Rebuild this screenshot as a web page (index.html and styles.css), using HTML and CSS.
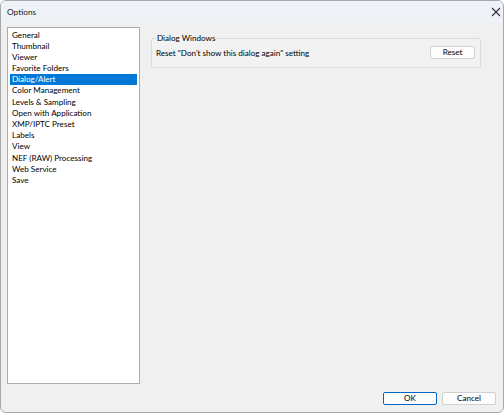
FILE: index.html
```html
<!DOCTYPE html>
<html>
<head>
<meta charset="utf-8">
<link rel="stylesheet" href="styles.css">
</head>
<body>
<div class="window">
  <div class="titlebar">
    <span class="title">Options</span>
    <svg class="close" width="10" height="10" viewBox="0 0 10 10"><path d="M1 1 L9 9 M9 1 L1 9" stroke="#333" stroke-width="1.1" fill="none"/></svg>
  </div>
  <div class="main">
    <ul class="list">
      <li>General</li>
      <li>Thumbnail</li>
      <li>Viewer</li>
      <li>Favorite Folders</li>
      <li class="sel">Dialog/Alert</li>
      <li>Color Management</li>
      <li>Levels &amp; Sampling</li>
      <li>Open with Application</li>
      <li>XMP/IPTC Preset</li>
      <li>Labels</li>
      <li>View</li>
      <li>NEF (RAW) Processing</li>
      <li>Web Service</li>
      <li>Save</li>
    </ul>
    <div class="pane">
      <fieldset class="group">
        <legend>Dialog Windows</legend>
        <div class="row">
          <span>Reset "Don't show this dialog again" setting</span>
          <button class="btn reset">Reset</button>
        </div>
      </fieldset>
    </div>
  </div>
  <div class="footer">
    <button class="btn ok">OK</button>
    <button class="btn">Cancel</button>
  </div>
</div>
</body>
</html>
```
FILE: styles.css
```css
html, body { margin: 0; padding: 0; }
body {
  font-family: Lato, "Noto Sans", sans-serif;
  font-size: 8.1px;
  color: #000;
  background: #fff;
}
.window {
  width: 504px;
  height: 413px;
  box-sizing: border-box;
  border: 1px solid #a8a8a8;
  border-radius: 6px;
  background: #f0f0f0;
  display: flex;
  flex-direction: column;
  overflow: hidden;
}
.titlebar {
  height: 22px;
  flex: none;
  display: flex;
  align-items: center;
  justify-content: space-between;
  padding: 0 2px 0 6px;
  background: linear-gradient(#eef3f9, #eef2f7);
}
.title { font-size: 8.3px; color: #1a1a1a; }
.main {
  display: flex;
  padding: 4px 0 0 6px;
}
.list {
  list-style: none;
  margin: 0;
  padding: 1.5px 2px 1px;
  width: 133px;
  height: 357px;
  box-sizing: border-box;
  background: #fff;
  border: 1px solid #adadad;
}
.list li {
  height: 11.2px;
  line-height: 11.2px;
  padding-left: 2px;
  white-space: nowrap;
}
.list li.sel {
  background: #0078d7;
  color: #fff;
}
.pane {
  margin-left: 11px;
  padding-top: 6px;
}
.group {
  margin: 0;
  width: 330px;
  box-sizing: border-box;
  border: 1px solid #dcdcdc;
  border-radius: 2px;
  padding: 3px 5px 8px 4px;
  background: #f2f2f2;
}
.group legend {
  padding: 0 1px;
  margin-left: 0;
}
.row {
  display: flex;
  align-items: center;
  justify-content: space-between;
}
.btn {
  font-family: inherit;
  font-size: 8.1px;
  color: #000;
  background: #fdfdfd;
  border: 1px solid #d0d0d0;
  border-radius: 2px;
  height: 13px;
  padding: 0;
  line-height: 11px;
}
.reset { width: 45px; }
.footer {
  display: flex;
  justify-content: flex-end;
  gap: 5px;
  padding: 8px 7px 0 0;
}
.footer .btn { width: 54px; }
.ok { border-color: #0067c0; }
```
